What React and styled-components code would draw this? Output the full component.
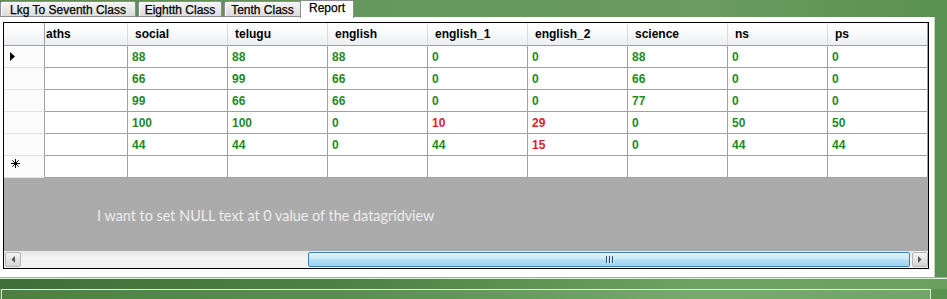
import React from "react";
import styled, { createGlobalStyle } from "styled-components";

const Global = createGlobalStyle`
  html, body { margin: 0; padding: 0; }
  body { background: #5e9455; font-family: "Liberation Sans", Arial, sans-serif; }
`;

const Screen = styled.div`
  width: 947px;
  height: 299px;
  overflow: hidden;
  display: flex;
  flex-direction: column;
  background: linear-gradient(90deg, #5a8f51 0%, #66995d 45%, #6a9c61 75%, #5a9050 100%);
`;

const TabStrip = styled.div`
  height: 17px;
  display: flex;
  align-items: flex-end;
  position: relative;
  z-index: 2;
`;

const Tab = styled.div`
  box-sizing: border-box;
  width: ${(p) => p.$w}px;
  height: ${(p) => (p.$active ? 18 : 16)}px;
  margin-left: ${(p) => p.$ml || 0}px;
  margin-bottom: ${(p) => (p.$active ? -1 : 0)}px;
  display: flex;
  align-items: center;
  justify-content: center;
  font-size: 12px;
  color: #000;
  -webkit-text-stroke: 0.25px #000;
  border: 1px solid #8a8d93;
  border-bottom: ${(p) => (p.$active ? "none" : "1px solid #8a8d93")};
  border-radius: 2px 2px 0 0;
  background: ${(p) =>
    p.$active ? "#ffffff" : "linear-gradient(#f4f4f4, #e9e9e9 50%, #dcdcdc)"};
  box-shadow: ${(p) => (p.$active ? "none" : "inset 1px 1px 0 #ffffff")};
  padding-top: ${(p) => (p.$active ? 0 : 1)}px;
  padding-bottom: ${(p) => (p.$active ? 3 : 0)}px;
`;

const Middle = styled.div`
  display: flex;
  align-items: stretch;
`;

const Panel = styled.div`
  box-sizing: border-box;
  width: 935px;
  height: 260px;
  background: #ffffff;
  border-right: 1px solid #c9cfc7;
  padding: 5px 0 0 3px;
`;

const Grid = styled.div`
  box-sizing: border-box;
  width: 926px;
  height: 247px;
  border: 1px solid #000;
  display: flex;
  flex-direction: column;
  background: #ababab;
`;

const COLS = "41px 83px repeat(8, 100px)";

const HeaderRow = styled.div`
  display: grid;
  grid-template-columns: ${COLS};
  height: 23px;
  background: #ffffff;
`;

const HeaderCell = styled.div`
  box-sizing: border-box;
  height: 23px;
  border-right: 1px solid ${(p) => (p.$strong ? "#a0a0a0" : "#dadada")};
  border-bottom: 1px solid #a0a0a0;
  background: linear-gradient(#ffffff, #f7f8fa 55%, #eceef1);
  font-weight: bold;
  font-size: 12px;
  color: #000;
  display: flex;
  align-items: center;
  padding-left: ${(p) => p.$pl ?? 7}px;
  white-space: nowrap;
  overflow: hidden;
`;

const Row = styled.div`
  display: grid;
  grid-template-columns: ${COLS};
  height: 22px;
  background: #ffffff;
`;

const RowHead = styled.div`
  box-sizing: border-box;
  border-right: 1px solid #a0a0a0;
  border-bottom: 1px solid #e2e2e2;
  background: #fcfcfc;
  display: flex;
  align-items: center;
  padding-left: 6px;
`;

const Cell = styled.div`
  box-sizing: border-box;
  border-right: 1px solid #a0a0a0;
  border-bottom: 1px solid #a0a0a0;
  font-weight: bold;
  font-size: 12px;
  color: ${(p) => (p.$bad ? "#e0202c" : "#1f8a1f")};
  display: flex;
  align-items: center;
  padding-left: 4px;
  padding-top: 1px;
`;

const EmptyArea = styled.div`
  flex: 1;
  display: flex;
  align-items: center;
  padding-left: 93px;
  padding-top: 2px;
  font-family: Lato, "Open Sans", sans-serif;
  font-size: 14.4px;
  color: #ededed;
`;

const HScroll = styled.div`
  height: 17px;
  display: flex;
  align-items: stretch;
  background: linear-gradient(#e8e8e8, #f4f4f4 40%, #f2f2f2);
  border-top: 1px solid #ececec;
  box-sizing: border-box;
  padding: 0 0 1px 1px;
`;

const ScrollBtn = styled.div`
  box-sizing: border-box;
  width: 16px;
  border: 1px solid #b5b5b5;
  border-radius: 2px;
  background: linear-gradient(#f5f5f5, #e4e4e4 50%, #d6d6d6);
  display: flex;
  align-items: center;
  justify-content: center;
`;

const Track = styled.div`
  flex: 1;
  display: flex;
  padding-right: 1px;
`;

const Thumb = styled.div`
  box-sizing: border-box;
  margin-left: ${(p) => p.$offset}px;
  width: ${(p) => p.$size}px;
  border: 1px solid #3c7fb1;
  border-radius: 2px;
  background: linear-gradient(#e6f5fd, #c8e8f9 45%, #b0dcf4 55%, #a4d5f0);
  display: flex;
  align-items: center;
  justify-content: center;
  gap: 2px;
`;

const Grip = styled.span`
  width: 1px;
  height: 7px;
  background: #20557d;
  box-shadow: 1px 0 0 #d8eefa;
`;

const RightGreen = styled.div`
  flex: 1;
`;

const Footer = styled.div`
  display: flex;
  flex-direction: column;
`;

const FooterLine = styled.div`
  height: 1px;
  background: ${(p) => p.$c};
`;

const Band = styled.div`
  height: 10px;
  background: linear-gradient(90deg, #3f6f38 0%, #4f8446 40%, #6ea463 75%, #6a9f5f 100%);
`;

const LowerBox = styled.div`
  margin-left: 1px;
  width: 930px;
  height: 12px;
  box-sizing: border-box;
  border-top: 1px solid #e6f1e2;
  border-left: 1px solid #d9e8d4;
  border-right: 1px solid #d9e8d4;
  background: linear-gradient(90deg, #4b8041 0%, #5a9150 40%, #76ab6b 75%, #6fa565 100%);
`;

const columns = ["aths", "social", "telugu", "english", "english_1", "english_2", "science", "ns", "ps"];

const rows = [
  [null, 88, 88, 88, 0, 0, 88, 0, 0],
  [null, 66, 99, 66, 0, 0, 66, 0, 0],
  [null, 99, 66, 66, 0, 0, 77, 0, 0],
  [null, 100, 100, 0, 10, 29, 0, 50, 50],
  [null, 44, 44, 0, 44, 15, 0, 44, 44],
];

const redCells = { "3-4": true, "3-5": true, "4-5": true };

const Arrow = () => (
  <svg width="6" height="9" viewBox="0 0 6 9">
    <path d="M0 0 L5 4.5 L0 9 Z" fill="#000" />
  </svg>
);

const Star = () => (
  <svg width="9" height="9" viewBox="0 0 9 9" style={{ marginTop: -7, marginLeft: 1 }}>
    <path d="M4.5 0 V9 M0 4.5 H9 M1.3 1.3 L7.7 7.7 M7.7 1.3 L1.3 7.7" stroke="#000" strokeWidth="1" />
  </svg>
);

const SmallArrow = ({ dir }) => (
  <svg width="4" height="7" viewBox="0 0 4 7">
    {dir === "left" ? (
      <path d="M4 0 L0.5 3.5 L4 7 Z" fill="#555" />
    ) : (
      <path d="M0 0 L3.5 3.5 L0 7 Z" fill="#555" />
    )}
  </svg>
);

export default function App() {
  return (
    <>
      <Global />
      <Screen>
        <TabStrip>
          <Tab $w={136}>Lkg To Seventh Class</Tab>
          <Tab $w={84} $ml={2}>Eightth Class</Tab>
          <Tab $w={77} $ml={2}>Tenth Class</Tab>
          <Tab $w={54} $ml={-1} $active>Report</Tab>
        </TabStrip>
        <Middle>
          <Panel>
            <Grid>
              <HeaderRow>
                <HeaderCell $pl={0} $strong />
                {columns.map((c, i) => (
                  <HeaderCell key={c} $pl={i === 0 ? 1 : 7} $strong={i === columns.length - 1}>
                    {c}
                  </HeaderCell>
                ))}
              </HeaderRow>
              {rows.map((r, ri) => (
                <Row key={ri}>
                  <RowHead>{ri === 0 ? <Arrow /> : null}</RowHead>
                  {r.map((v, ci) => (
                    <Cell key={ci} $bad={redCells[`${ri}-${ci}`]}>
                      {v === null ? "" : v}
                    </Cell>
                  ))}
                </Row>
              ))}
              <Row>
                <RowHead><Star /></RowHead>
                {columns.map((c) => (
                  <Cell key={c} />
                ))}
              </Row>
              <EmptyArea>I want to set NULL text at 0 value of the datagridview</EmptyArea>
              <HScroll>
                <ScrollBtn><SmallArrow dir="left" /></ScrollBtn>
                <Track>
                  <Thumb $offset={287} $size={602}>
                    <Grip />
                    <Grip />
                    <Grip />
                  </Thumb>
                </Track>
                <ScrollBtn><SmallArrow dir="right" /></ScrollBtn>
              </HScroll>
            </Grid>
          </Panel>
          <RightGreen />
        </Middle>
        <Footer>
          <FooterLine $c="#9fb09a" />
          <FooterLine $c="#e3ece0" />
          <Band />
          <LowerBox />
        </Footer>
      </Screen>
    </>
  );
}
